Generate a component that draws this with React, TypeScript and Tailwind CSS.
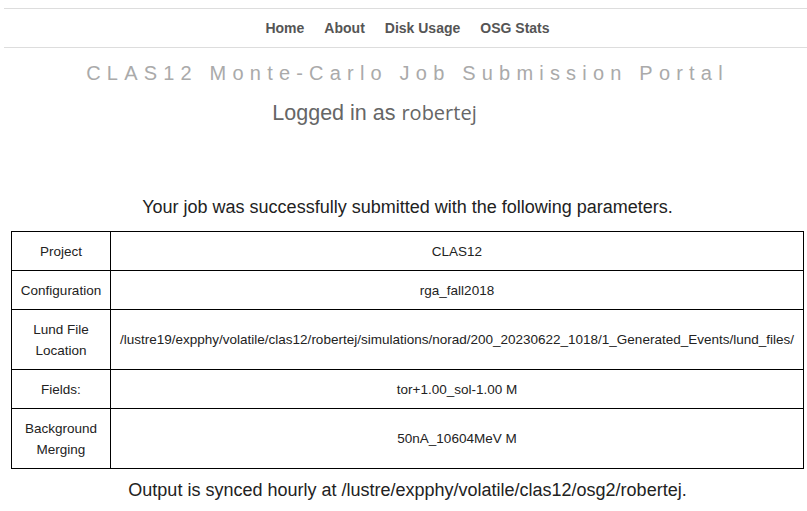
const rows: { label: string[]; value: string }[] = [
  { label: ['Project'], value: 'CLAS12' },
  { label: ['Configuration'], value: 'rga_fall2018' },
  {
    label: ['Lund File', 'Location'],
    value: '/lustre19/expphy/volatile/clas12/robertej/simulations/norad/200_20230622_1018/1_Generated_Events/lund_files/',
  },
  { label: ['Fields:'], value: 'tor+1.00_sol-1.00 M' },
  { label: ['Background', 'Merging'], value: '50nA_10604MeV M' },
];

export default function App() {
  return (
    <div className="min-h-screen bg-white font-['Liberation_Sans',Arial,sans-serif] text-[#222]">
      {/* nav */}
      <nav className="ml-1 mt-2 flex h-[40px] items-center justify-center gap-[20px] border-y border-[#ddd] pl-1 text-[14px] font-bold text-[#555]">
        <a>Home</a>
        <a>About</a>
        <a>Disk Usage</a>
        <a>OSG Stats</a>
      </nav>

      <div className="pl-2">
        <h1 className="mt-[12px] text-center text-[20px] leading-[26px] tracking-[6.2px] text-[#aaa]">
          CLAS12 Monte-Carlo Job Submission Portal
        </h1>

        <div className="mt-[14px] flex items-baseline justify-center pr-[66px] text-[21.5px] leading-[26px] text-[#666]">
          <span>Logged in as&nbsp;</span>
          <span className="font-['Open_Sans',sans-serif] text-[20px]">robertej</span>
        </div>

        <p className="mt-[69px] text-center text-[18px] leading-[24px] text-[#222]">
          Your job was successfully submitted with the following parameters.
        </p>
      </div>

      <table className="ml-[11px] mt-[12px] w-[793px] table-fixed border-collapse text-center text-[13.5px] leading-[21px] text-[#222]">
        <colgroup>
          <col className="w-[99px]" />
          <col />
        </colgroup>
        <tbody>
          {rows.map((r) => (
            <tr key={r.value}>
              <td className="border border-black px-1 py-[8.5px]">
                {r.label.map((l) => (
                  <div key={l}>{l}</div>
                ))}
              </td>
              <td className="border border-black px-1 py-[8.5px] whitespace-nowrap">{r.value}</td>
            </tr>
          ))}
        </tbody>
      </table>

      <p className="mt-[9px] pl-2 text-center text-[18px] leading-[24px] text-[#222]">
        Output is synced hourly at /lustre/expphy/volatile/clas12/osg2/robertej.
      </p>
    </div>
  );
}
